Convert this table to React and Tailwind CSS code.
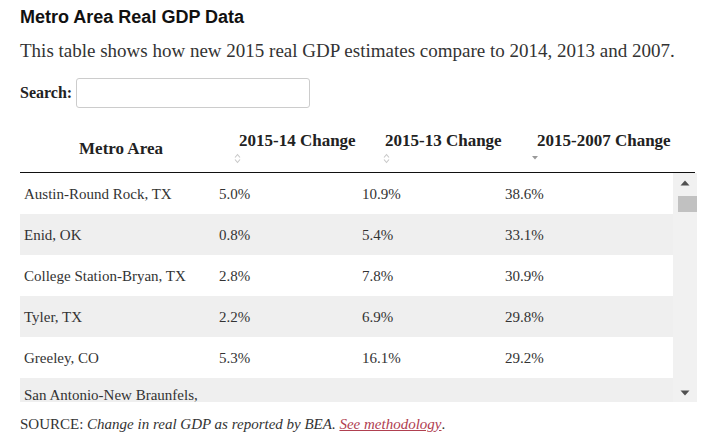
import React from "react";

const rows = [
  ["Austin-Round Rock, TX", "5.0%", "10.9%", "38.6%"],
  ["Enid, OK", "0.8%", "5.4%", "33.1%"],
  ["College Station-Bryan, TX", "2.8%", "7.8%", "30.9%"],
  ["Tyler, TX", "2.2%", "6.9%", "29.8%"],
  ["Greeley, CO", "5.3%", "16.1%", "29.2%"],
];

function SortBoth() {
  return (
    <svg width="7" height="11" viewBox="0 0 7 11" className="block">
      <path d="M1 4.5 L3.5 1.5 L6 4.5" fill="none" stroke="#c8c8c8" strokeWidth="1.1" />
      <path d="M1 6.5 L3.5 9.5 L6 6.5" fill="none" stroke="#c8c8c8" strokeWidth="1.1" />
    </svg>
  );
}

function SortDesc() {
  return (
    <svg width="8" height="11" viewBox="0 0 8 11" className="block">
      <path d="M1 5 L7 5 L4 8.5 Z" fill="#9a9a9a" />
    </svg>
  );
}

export default function App() {
  const serif = { fontFamily: '"Liberation Serif", "DejaVu Serif", serif' };
  return (
    <div className="w-[723px] h-[439px] bg-white text-[#222] overflow-hidden px-5 pt-[6px]" style={serif}>
      <h2 className="text-[18px] font-bold leading-[22px] text-[#111]" style={{ fontFamily: '"Liberation Sans", Arial, sans-serif' }}>
        Metro Area Real GDP Data
      </h2>

      <p className="mt-[11px] text-[19px] leading-[24px] text-[#333]">
        This table shows how new 2015 real GDP estimates compare to 2014, 2013 and 2007.
      </p>

      <div className="mt-[15px] flex items-center gap-[4px]">
        <label className="text-[16px] font-bold text-[#222]">Search:</label>
        <input className="w-[234px] h-[30px] border border-[#ccc] rounded-[3px] bg-white" />
      </div>

      {/* header */}
      <div className="mt-[18px] w-[675px] flex h-[47px] border-b-[1.5px] border-[#111] text-[17px] font-bold text-[#222]">
        <div className="w-[202px] flex items-center justify-center">Metro Area</div>
        <div className="w-[153px] flex flex-col pt-[5px] pl-[12px]">
          <span className="pl-[5px] leading-[20px]">2015-14 Change</span>
          <span className="mt-[2px]"><SortBoth /></span>
        </div>
        <div className="w-[152px] flex flex-col pt-[5px] pl-[8px]">
          <span className="pl-[2px] leading-[20px]">2015-13 Change</span>
          <span className="mt-[2px]"><SortBoth /></span>
        </div>
        <div className="flex-1 flex flex-col pt-[5px] pl-[4px]">
          <span className="pl-[6px] leading-[20px]">2015-2007 Change</span>
          <span className="mt-0"><SortDesc /></span>
        </div>
      </div>

      {/* body */}
      <div className="flex w-[677px] h-[229px]">
        <div className="flex-1 overflow-hidden text-[15px] text-[#333]">
          {rows.map((r, i) => (
            <div
              key={i}
              className={`grid grid-cols-[199px_143px_143px_1fr] items-center h-[41px] pt-[2px] ${i % 2 === 1 ? "bg-[#efefef]" : "bg-white"}`}
            >
              <div className="pl-1">{r[0]}</div>
              <div>{r[1]}</div>
              <div>{r[2]}</div>
              <div>{r[3]}</div>
            </div>
          ))}
          <div className="grid grid-cols-[199px_143px_143px_1fr] h-[41px] pt-[8px] bg-[#efefef] leading-[18px]">
            <div className="pl-1">San Antonio-New Braunfels,</div>
          </div>
        </div>
        <div className="w-[24px] bg-[#f1f1f1] flex flex-col items-center">
          <svg width="10" height="6" viewBox="0 0 10 6" className="mt-[7px]">
            <path d="M0.5 5.5 L5 0.5 L9.5 5.5 Z" fill="#505050" />
          </svg>
          <div className="mt-[10px] ml-[4px] w-[19px] h-[16px] bg-[#c1c1c1]" />
          <div className="flex-1" />
          <svg width="10" height="6" viewBox="0 0 10 6" className="mb-[6px]">
            <path d="M0.5 0.5 L9.5 0.5 L5 5.5 Z" fill="#505050" />
          </svg>
        </div>
      </div>

      <p className="mt-[11px] text-[15px] text-[#333]">
        SOURCE: <em>Change in real GDP as reported by BEA.</em>{" "}
        <a className="italic text-[#b04050] underline">See methodology</a>.
      </p>
    </div>
  );
}
